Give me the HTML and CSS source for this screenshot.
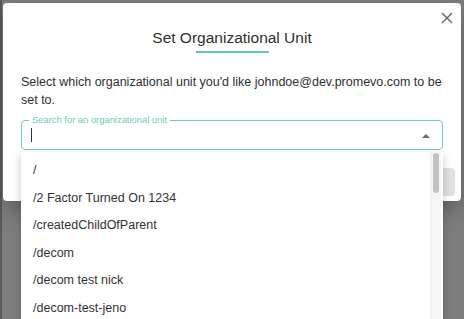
FILE: index.html
```html
<!DOCTYPE html>
<html>
<head>
<meta charset="utf-8">
<link rel="stylesheet" href="styles.css">
</head>
<body>
<div class="backdrop">
  <div class="modal">
    <button class="close" aria-label="close">
      <svg width="12" height="12" viewBox="0 0 12 12"><path d="M1 1 L11 11 M11 1 L1 11" stroke="#6b6b6b" stroke-width="1.5" fill="none"/></svg>
    </button>
    <div class="head">
      <h2 class="title">Set Organizational Unit</h2>
      <div class="accent"></div>
    </div>
    <p class="desc">Select which organizational unit you'd like johndoe@dev.promevo.com to be set to.</p>
    <div class="field">
      <span class="label">Search for an organizational unit</span>
      <span class="caret"></span>
      <span class="arrow"></span>
    </div>
    <div class="footer">
      <button class="btn">Cancel</button>
    </div>
    <div class="listbox">
      <ul class="options">
        <li>/</li>
        <li>/2 Factor Turned On 1234</li>
        <li>/createdChildOfParent</li>
        <li>/decom</li>
        <li>/decom test nick</li>
        <li>/decom-test-jeno</li>
      </ul>
      <div class="scroll"><div class="thumb"></div></div>
    </div>
  </div>
</div>
</body>
</html>
```
FILE: styles.css
```css
html, body {
  margin: 0;
  padding: 0;
  height: 100%;
  overflow: hidden;
}
body {
  font-family: "Liberation Sans", Arial, sans-serif;
  background: #7d7d7d;
}
.backdrop {
  height: 319px;
  padding: 3px 0 0 1px;
  box-sizing: border-box;
  border-left: 2px solid #5a5a5a;
}
.modal {
  position: relative;
  width: 458px;
  height: 198px;
  box-sizing: border-box;
  background: #fff;
  border-radius: 4px;
  padding: 0 18px;
  box-shadow: 0 8px 20px rgba(0,0,0,0.25);
}
.close {
  position: absolute;
  top: 8px;
  right: 7px;
  width: 14px;
  height: 14px;
  padding: 1px;
  border: 0;
  background: none;
  display: flex;
  align-items: center;
  justify-content: center;
}
.head {
  padding-top: 25px;
  display: flex;
  flex-direction: column;
  align-items: center;
}
.title {
  margin: 0;
  font-size: 15.5px;
  line-height: 20px;
  font-weight: normal;
  color: #2f2f2f;
}
.accent {
  width: 73px;
  height: 2px;
  margin-top: 3px;
  background: #62c9a5;
}
.desc {
  margin: 20px -4px 0 0;
  font-size: 12.5px;
  line-height: 18px;
  color: #2f2f2f;
}
.field {
  position: relative;
  margin-top: 11px;
  height: 30px;
  box-sizing: border-box;
  border: 1px solid #6ccfaa;
  border-radius: 4px;
  display: flex;
  align-items: center;
  padding-left: 9px;
}
.label {
  position: absolute;
  top: -7px;
  left: 7px;
  padding: 0 3px;
  background: #fff;
  font-size: 9.4px;
  line-height: 12px;
  color: #6ccfaa;
}
.caret {
  width: 1px;
  height: 14px;
  background: #333;
}
.arrow {
  position: absolute;
  right: 12px;
  top: 13px;
  width: 0;
  height: 0;
  border-left: 4px solid transparent;
  border-right: 4px solid transparent;
  border-bottom: 4px solid #6b6b6b;
}
.footer {
  display: flex;
  justify-content: flex-end;
  margin: 18px -12px 0 0;
}
.btn {
  width: 72px;
  height: 28px;
  border: 0;
  border-radius: 4px;
  background: #e0e0e0;
  font-family: inherit;
  font-size: 13px;
  color: #444;
}
.listbox {
  position: absolute;
  top: 149px;
  left: 18px;
  width: 422px;
  height: 167px;
  background: #fff;
  box-shadow: 0 3px 8px rgba(0,0,0,0.22);
  overflow: hidden;
  display: flex;
}
.options {
  list-style: none;
  margin: 0;
  padding: 5px 0 0 12px;
  flex: 1;
}
.options li {
  height: 27.5px;
  line-height: 27.5px;
  font-size: 12.5px;
  color: #333;
}
.scroll {
  width: 10px;
  margin-right: 2px;
  background: #f6f6f6;
  border-left: 1px solid #eeeeee;
  display: flex;
  justify-content: center;
  padding-top: 1px;
}
.thumb {
  width: 6px;
  height: 40px;
  border-radius: 3px;
  background: #c3c3c3;
}
```
